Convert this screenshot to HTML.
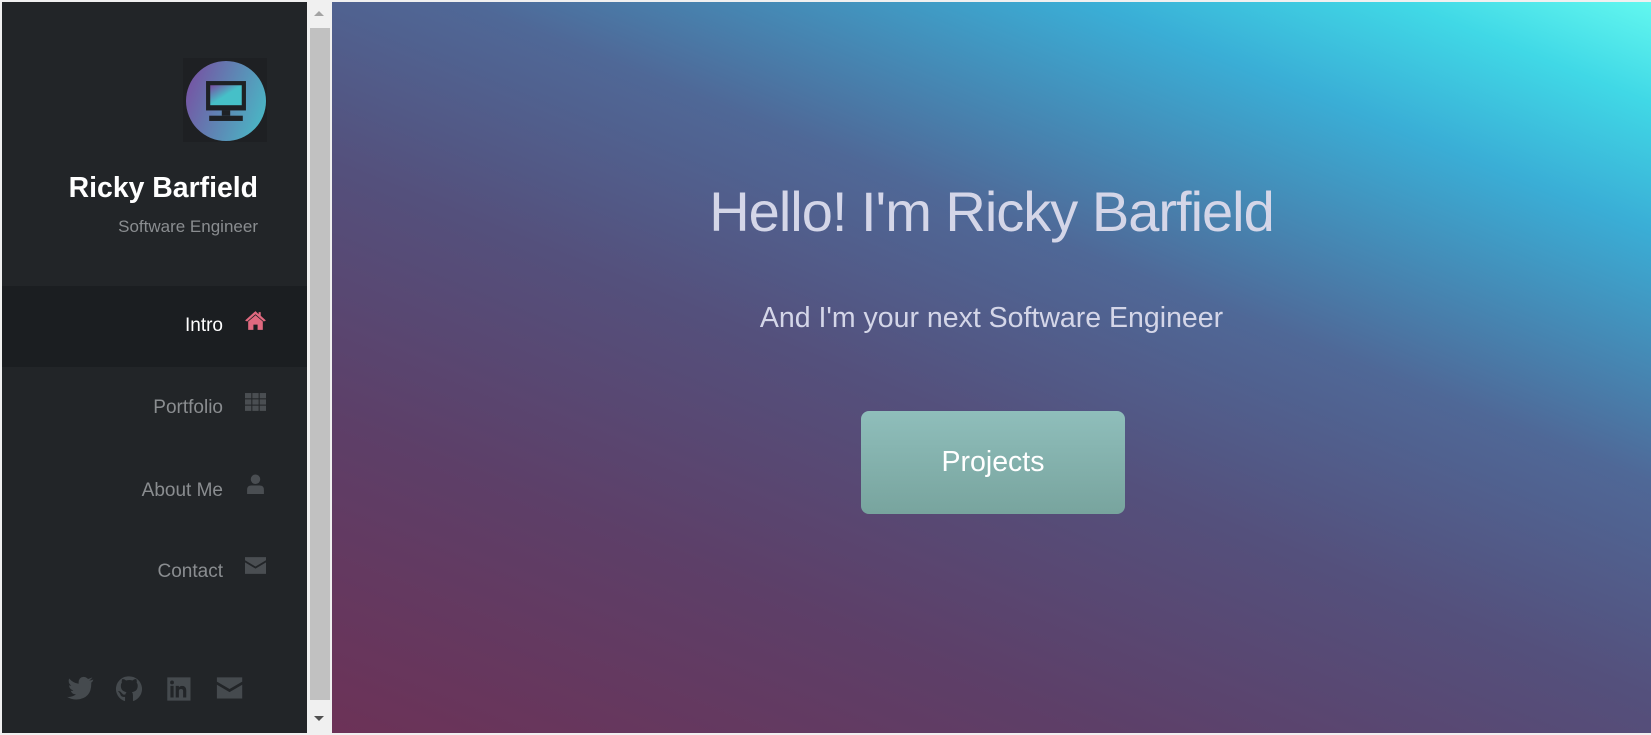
<!DOCTYPE html>
<html><head><style>
*{margin:0;padding:0;box-sizing:border-box}
body{width:1651px;height:735px;overflow:hidden;background:#f0f0f0;font-family:"Liberation Sans",sans-serif;position:relative}
#side{position:absolute;left:2px;top:2px;width:305px;height:731px;background:#222528}
#sb{position:absolute;left:307px;top:2px;width:25px;height:731px;background:#f0f0f0}
#thumb{position:absolute;left:310px;top:28px;width:20px;height:672px;background:#c1c1c1}
#main{position:absolute;left:332px;top:2px;width:1319px;height:731px;
background:linear-gradient(22deg,#6c3257 0%,#5d3f68 25%,#54507c 45%,#4f6897 62%,#3aaed6 82%,#40d8e6 92%,#62f7ef 100%)}
.t{position:absolute;white-space:nowrap;line-height:1}
.nav{position:absolute;left:2px;width:305px;height:81px}
</style></head><body>
<div id="side"></div>
<div class="nav" style="top:286px;background:#1b1e21"></div>
<div style="position:absolute;left:183px;top:58px;width:84px;height:84px;background:#1e2023"></div>
<div style="position:absolute;left:186px;top:61px;width:80px;height:80px;border-radius:50%;background:linear-gradient(110deg,#7a4aa0,#5e86b4 50%,#46c0c8)"></div>
<svg style="position:absolute;left:205px;top:80px" width="42" height="42" viewBox="0 0 40 40"><defs><linearGradient id="g" x1="0" y1="0" x2="1" y2="1"><stop offset="0" stop-color="#7a4aa0"/><stop offset=".5" stop-color="#46c0c8"/></linearGradient></defs><rect x="1" y="1" width="38" height="28" fill="#1e2125"/><rect x="5" y="5" width="30" height="19" fill="url(#g)"/><rect x="16" y="29" width="8" height="5" fill="#1e2125"/><rect x="4" y="34" width="32" height="5" fill="#1e2125"/></svg>
<div class="t" style="right:1393px;top:174px;font-size:28.4px;font-weight:bold;color:#fff">Ricky Barfield</div>
<div class="t" style="right:1393px;top:218px;font-size:17px;color:#8a8d90">Software Engineer</div>
<div class="t" style="right:1428px;top:316px;font-size:19px;color:#fff">Intro</div>
<svg style="position:absolute;left:244px;top:310px" width="23" height="21" viewBox="0 0 22 20"><path d="M11 1 L1 10 L3 11 L11 4 L19 11 L21 10 L16 5.5 V2 H14 V4 Z M4 11 L11 5 L18 11 V19 H13 V14 H9 V19 H4 Z" fill="#e0697f"/></svg>
<div class="t" style="right:1428px;top:398px;font-size:19px;color:#8a8d90">Portfolio</div>
<svg style="position:absolute;left:245px;top:393px" width="21" height="19" viewBox="0 0 20 18"><g fill="#4a4e52"><rect x="0" y="0" width="6" height="5"/><rect x="7" y="0" width="6" height="5"/><rect x="14" y="0" width="6" height="5"/><rect x="0" y="6" width="6" height="5"/><rect x="7" y="6" width="6" height="5"/><rect x="14" y="6" width="6" height="5"/><rect x="0" y="12" width="6" height="5"/><rect x="7" y="12" width="6" height="5"/><rect x="14" y="12" width="6" height="5"/></g></svg>
<div class="t" style="right:1428px;top:481px;font-size:19px;color:#8a8d90">About Me</div>
<svg style="position:absolute;left:246px;top:474px" width="19" height="21" viewBox="0 0 18 20"><g fill="#4a4e52"><circle cx="9" cy="5" r="4.5"/><path d="M1 19 V15 Q1 11 5 11 H13 Q17 11 17 15 V19 Z"/></g></svg>
<div class="t" style="right:1428px;top:562px;font-size:19px;color:#8a8d90">Contact</div>
<svg style="position:absolute;left:245px;top:557px" width="21" height="17" viewBox="0 0 20 16"><path d="M0 0 H20 V3 L10 9 L0 3 Z M0 5 L10 11 L20 5 V16 H0 Z" fill="#4a4e52"/></svg>
<svg style="position:absolute;left:67px;top:674px" width="190" height="30" viewBox="0 0 180 28"><g fill="#454a4e">
<path d="M25 5 Q23 6 21 6 Q23 5 24 3 Q22 4 20 4.5 Q18 2.5 15.5 2.5 Q11 3 11 8 V9 Q6 8.5 2 4 Q0.5 8 4 11 Q2.5 11 2 10.5 Q2 14 6 15.5 Q4.5 16 3.5 15.5 Q4.5 19 8.5 19 Q5 22 0 21.5 Q4 24 9 24 Q23 23 23 9 V8 Q24.5 7 25 5 Z"/>
<path d="M59 2 A12 12 0 0 0 55 25.5 V21.5 Q51 22 50.5 19 Q49.5 17 48.5 16.5 Q48 16 49.5 16 Q51 16.5 52 18 Q53.5 20 55.5 19 Q55.5 17.5 56.5 17 Q51 16 51 11 Q51 9 52 8 Q51.5 6 52.5 4.5 Q54.5 4.5 56 6 Q59 5 62 6 Q63.5 4.5 65.5 4.5 Q66.5 6 66 8 Q67 9 67 11 Q67 16 61.5 17 Q62.5 18 62.5 20 V25.5 A12 12 0 0 0 59 2 Z"/>
<path d="M95 3 H117 V25 H95 Z M98 11 V22 H101 V11 Z M99.5 6 A1.8 1.8 0 1 0 99.5 9.6 A1.8 1.8 0 1 0 99.5 6 Z M103 11 V22 H106 V16 Q106 14 108 14 Q110 14 110 16 V22 H113 V15.5 Q113 11 109 11 Q107 11 106 12.5 V11 Z" fill-rule="evenodd"/>
<path d="M142 3 H166 V7 L154 14 L142 7 Z M142 10 L154 17 L166 10 V23 H142 Z"/>
</g></svg>
<div id="sb"></div><div id="thumb"></div>
<div style="position:absolute;left:314px;top:11px;width:0;height:0;border-left:5px solid transparent;border-right:5px solid transparent;border-bottom:5px solid #a3a3a3"></div>
<div style="position:absolute;left:314px;top:716px;width:0;height:0;border-left:5px solid transparent;border-right:5px solid transparent;border-top:5px solid #505050"></div>
<div id="main"></div>
<div class="t" style="left:332px;width:1319px;text-align:center;top:184px;font-size:56px;color:#d4d6e8;letter-spacing:-1px">Hello! I'm Ricky Barfield</div>
<div class="t" style="left:332px;width:1319px;text-align:center;top:304px;font-size:28.5px;color:#d4d6e8">And I'm your next Software Engineer</div>
<div style="position:absolute;left:861px;top:411px;width:264px;height:103px;border-radius:8px;background:linear-gradient(#8fbebb,#78a49e);color:#fff;font-size:28.5px;text-align:center;line-height:103px">Projects</div>
</body></html>
